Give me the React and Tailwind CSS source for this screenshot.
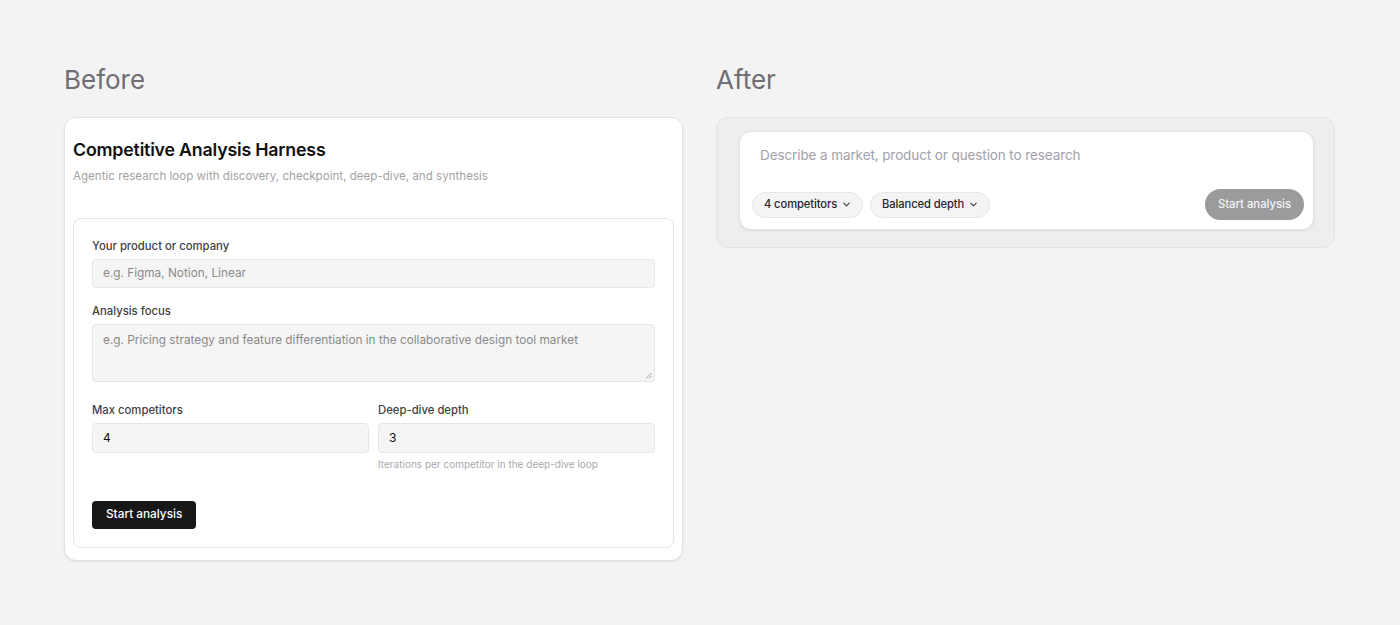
import React from "react";
import { ChevronDown } from "lucide-react";

const inter = { fontFamily: "Inter, 'Liberation Sans', sans-serif" };

const Label = ({ children }) => (
    <label className="block text-[11.3px] leading-4 font-medium text-[#3f3f46] mb-[5px]">
        {children}
    </label>
);

const Before = () => (
    <div className="w-[619px]">
        <h2 className="text-[26px] leading-9 text-[#6e6e73] mb-[19px]">Before</h2>
        <div className="bg-white border border-[#e2e2e2] rounded-xl shadow-[0_1px_2px_rgba(0,0,0,0.08)] px-2 pt-5 pb-3">
            <h1 className="text-[17.8px] leading-6 font-semibold text-[#111] tracking-[-0.2px]">
                Competitive Analysis Harness
            </h1>
            <p className="text-[11.6px] leading-5 text-[#a3a3a3] mt-1">
                Agentic research loop with discovery, checkpoint, deep-dive, and synthesis
            </p>

            <div className="mt-[32px] border border-[#e6e6e6] rounded-lg px-[18px] pt-[19px] pb-[18px]">
                <Label>Your product or company</Label>
                <div className="h-[29px] bg-[#f5f5f5] border border-[#e6e6e6] rounded flex items-center px-[10px] text-[11.8px] text-[#8a8a8a]">
                    e.g. Figma, Notion, Linear
                </div>

                <div className="mt-[15px]">
                    <Label>Analysis focus</Label>
                    <div className="relative h-[58px] bg-[#f5f5f5] border border-[#e6e6e6] rounded px-[10px] pt-[7px] text-[11.8px] leading-4 text-[#8a8a8a]">
                        e.g. Pricing strategy and feature differentiation in the collaborative design tool market
                        <svg className="absolute right-[2px] bottom-[2px]" width="7" height="7" viewBox="0 0 7 7">
                            <path d="M6.5 1 L1 6.5 M6.5 4 L4 6.5" stroke="#8a8a8a" strokeWidth="0.8" />
                        </svg>
                    </div>
                </div>

                <div className="mt-[20px] grid grid-cols-2 gap-[9px]">
                    <div>
                        <Label>Max competitors</Label>
                        <div className="h-[30px] bg-[#f5f5f5] border border-[#e6e6e6] rounded flex items-center px-[10px] text-[12px] text-[#111]">
                            4
                        </div>
                    </div>
                    <div>
                        <Label>Deep-dive depth</Label>
                        <div className="h-[30px] bg-[#f5f5f5] border border-[#e6e6e6] rounded flex items-center px-[10px] text-[12px] text-[#111]">
                            3
                        </div>
                        <p className="mt-1 text-[10px] leading-[14px] text-[#a8a8ae]">
                            Iterations per competitor in the deep-dive loop
                        </p>
                    </div>
                </div>

                <button className="mt-[30px] h-[28px] px-[14px] bg-[#171717] text-white text-[11.8px] font-medium rounded">
                    Start analysis
                </button>
            </div>
        </div>
    </div>
);

const Chip = ({ children }) => (
    <div className="h-[26px] flex items-center gap-[4px] pl-[11px] pr-[10px] rounded-full bg-[#f4f4f5] border border-[#e6e6e8] text-[11.2px] font-medium text-[#27272a] tracking-[-0.1px]">
        {children}
        <ChevronDown className="w-[11px] h-[11px] text-[#3f3f46]" strokeWidth={2.4} />
    </div>
);

const After = () => (
    <div className="w-[619px]">
        <h2 className="text-[26px] leading-9 text-[#6e6e73] mb-[19px]">After</h2>
        <div className="bg-[#eeeef0] border border-[#e4e4e7] rounded-xl pl-[22px] pr-[20px] pt-[13px] pb-[17px]">
            <div className="bg-white border border-[#e4e4e7] rounded-xl shadow-[0_1px_3px_rgba(0,0,0,0.08)] pl-[12px] pr-[9px] pt-[13px] pb-[9px]">
                <p className="px-2 text-[13.5px] leading-5 text-[#a1a1aa] tracking-[-0.1px]">
                    Describe a market, product or question to research
                </p>
                <div className="mt-6 flex items-center justify-between">
                    <div className="flex items-center gap-[7px]">
                        <Chip>4 competitors</Chip>
                        <Chip>Balanced depth</Chip>
                    </div>
                    <button className="h-[31px] px-[13px] rounded-full bg-[#9b9b9d] text-[#f4f4f5] text-[11.3px] font-medium">
                        Start analysis
                    </button>
                </div>
            </div>
        </div>
    </div>
);

export default function App() {
    return (
        <div className="min-h-screen bg-[#f3f3f3] pt-[62px] px-16 flex gap-[33px]" style={inter}>
            <Before />
            <After />
        </div>
    );
}
